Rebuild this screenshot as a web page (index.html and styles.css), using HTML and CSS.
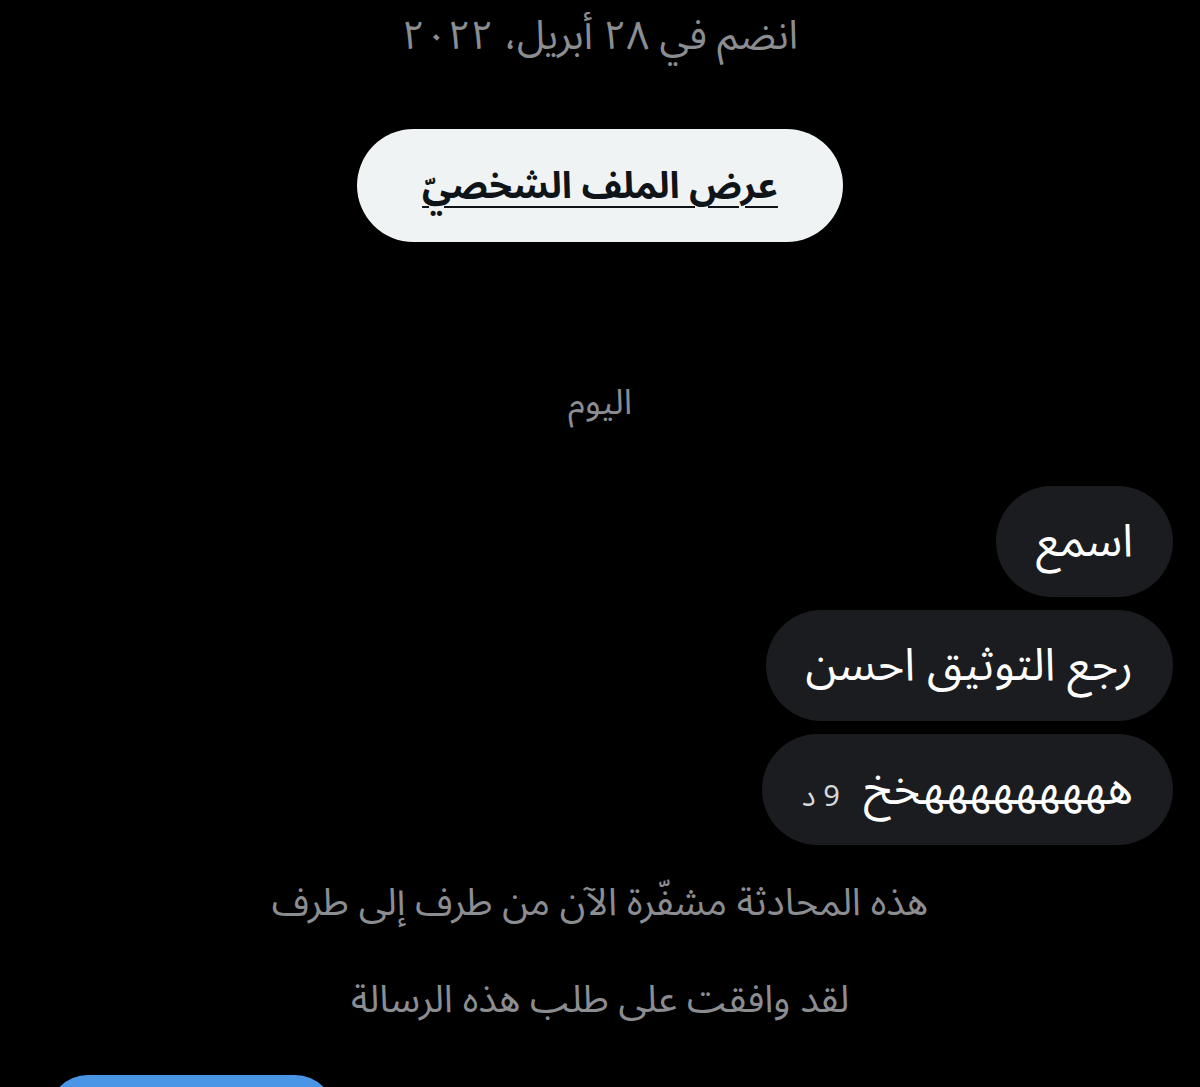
FILE: index.html
```html
<!DOCTYPE html>
<html lang="ar" dir="rtl">
<head>
<meta charset="UTF-8" />
<meta name="viewport" content="width=device-width, initial-scale=1" />
<title>الرسائل</title>
<link rel="stylesheet" href="styles.css">
</head>
<body>

  <!-- Profile summary at the top of the conversation -->
  <div class="profile-info">
    <p class="joined">انضم في ٢٨ أبريل، ٢٠٢٢</p>
    <button class="profile-button">عرض الملف الشخصيّ</button>
  </div>

  <!-- Conversation -->
  <div class="conversation">
    <p class="day-label">اليوم</p>

    <div class="messages">
      <div class="bubble">اسمع</div>
      <div class="bubble">رجع التوثيق احسن</div>
      <div class="bubble">
        <span>هههههههههخخ</span>
        <span class="time">9 د</span>
      </div>
    </div>

    <p class="notice first">هذه المحادثة مشفّرة الآن من طرف إلى طرف</p>
    <p class="notice">لقد وافقت على طلب هذه الرسالة</p>
  </div>

  <div class="footer">
    <div class="action-button"></div>
  </div>

</body>
</html>
```

FILE: styles.css
```css
/* Base */
* {
  box-sizing: border-box;
}
html {
  overflow: hidden;
}
body {
  margin: 0;
  background: #000;
  color: #fff;
  font-family: 'Noto Sans Arabic', 'Noto Sans', 'DejaVu Sans', sans-serif;
  height: 1087px;
  overflow: hidden;
}
p {
  margin: 0;
}

/* Profile summary */
.profile-info {
  display: flex;
  flex-direction: column;
  align-items: center;
  padding-top: 6px;
}
.joined {
  font-size: 40px;
  line-height: 62px;
  color: #8b8d91;
}
.profile-button {
  margin-top: 61px;
  width: 486px;
  height: 113px;
  border: none;
  border-radius: 57px;
  background: #eff3f4;
  color: #0f1419;
  font-family: inherit;
  font-size: 37px;
  font-weight: 700;
  text-decoration: underline;
  text-underline-offset: 8px;
  text-decoration-thickness: 2px;
}

/* Conversation */
.conversation {
  display: flex;
  flex-direction: column;
  align-items: center;
}
.day-label {
  margin-top: 140px;
  font-size: 35px;
  line-height: 42px;
  color: #8b8d91;
}
.messages {
  align-self: stretch;
  display: flex;
  flex-direction: column;
  align-items: flex-start;
  gap: 13px;
  margin-top: 62px;
  padding-right: 27px;
}
.bubble {
  display: flex;
  align-items: center;
  gap: 24px;
  height: 111px;
  padding: 0 40px;
  border-radius: 56px;
  background: #1b1c1f;
  font-size: 45.5px;
  line-height: 60px;
  color: #fff;
}
.bubble .time {
  font-size: 29px;
  color: #d6d7d9;
  padding-top: 14px;
}
.notice {
  font-size: 38px;
  line-height: 44px;
  color: #8b8d91;
}
.notice.first {
  margin-top: 36px;
}
.notice + .notice {
  margin-top: 53px;
}

/* Bottom action bar */
.footer {
  display: flex;
  justify-content: flex-end;
  padding: 53px 48px 0;
}
.action-button {
  width: 287px;
  height: 80px;
  border-radius: 40px;
  background: #4a96e6;
}
```
